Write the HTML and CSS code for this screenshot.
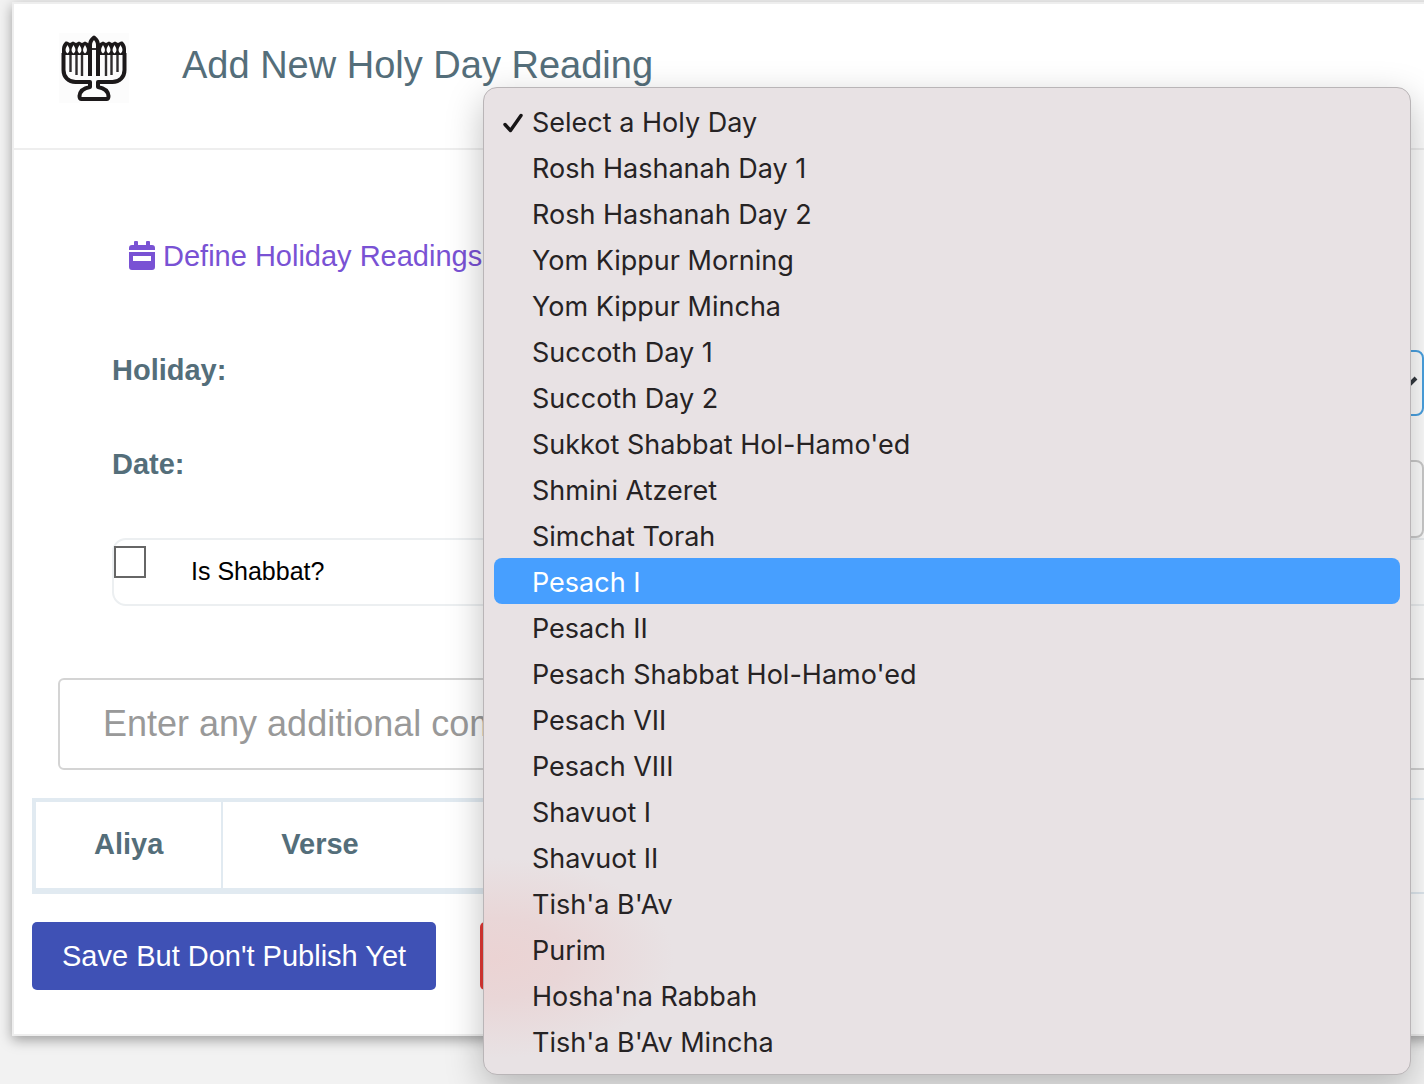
FILE: index.html
```html
<!DOCTYPE html>
<html lang="en">
  <head>
    <meta charset="UTF-8" />
    <meta name="viewport" content="width=device-width, initial-scale=1.0" />
    <title>Add New Holy Day Reading</title>
    <link rel="stylesheet" href="styles.css">
  </head>
  <body>
    <main class="card">
      <header class="card-header">
        <svg class="logo" viewBox="0 0 70 70" aria-hidden="true">
          <rect width="70" height="70" fill="#fcfcfc" />
          <g fill="none" stroke="#1c191a" stroke-width="4" stroke-linejoin="round">
            <path d="M4.500 20v17c0 7 5 12 12 12h14.500v5c-6 1-10 4-10.500 9q0 3 2 3h25q2 0 2-3c-.5-5-4.500-8-10.500-9v-5h14.500c7 0 12-5 12-12v-17" />
            <path d="M31 43V12c0-4 2-6 4-7.500 2 1.500 4 3.500 4 7.500v31" />
          </g>
          <path d="M3 22v-6c0-3 1.500-6 3.500-7.500h1.500l3 1.500 3-1.500 3 1.500 3-1.500 3 1.500 3-1.500 4 2v11.500zM67 22v-6c0-3-1.500-6-3.500-7.500h-1.500l-3 1.500-3-1.500-3 1.500-3-1.500-3 1.500-3-1.500-4 2v11.500z" fill="#1c191a" />
          <path d="M8.500 12q-4 6 0 8.500 4-2.500 0-8.500zM14.500 12q-4 6 0 8.500 4-2.500 0-8.500zM20.500 12q-4 6 0 8.500 4-2.500 0-8.500zM26 12q-4 6 0 8.500 4-2.500 0-8.500zM44 12q-4 6 0 8.500 4-2.500 0-8.500zM49.500 12q-4 6 0 8.500 4-2.500 0-8.500zM55.500 12q-4 6 0 8.500 4-2.500 0-8.500zM61.500 12q-4 6 0 8.500 4-2.500 0-8.500z" fill="#fff" />
          <path d="M32 16h6" stroke="#1c191a" stroke-width="1.800" />
          <path d="M11.500 22v17M17.500 22v20M23 22v21M58.500 22v17M52.500 22v20M47 22v21" fill="none" stroke="#302d2e" stroke-width="2.400" />
        </svg>
        <h1>Add New Holy Day Reading</h1>
      </header>

      <form class="reading-form">
        <a class="define-link" href="#">
          <svg class="calendar-icon" viewBox="0 0 26 30" aria-hidden="true">
            <path fill="currentColor" d="M6 0h2q1 0 1 1v3h8V1q0-1 1-1h2q1 0 1 1v3h2q3 0 3 3v2H0V7q0-3 3-3h2V1q0-1 1-1z" />
            <path fill="currentColor" fill-rule="evenodd" d="M0 11h26v15q0 3-3 3H3q-3 0-3-3zM4 15v5h18v-5z" />
          </svg>
          Define Holiday Readings
        </a>

        <div class="form-row">
          <label for="holiday">Holiday:</label>
          <div class="select-wrap">
            <select id="holiday">
              <option value=""></option>
              <option>Rosh Hashanah Day 1</option>
              <option>Rosh Hashanah Day 2</option>
              <option>Pesach I</option>
              <option>Pesach II</option>
            </select>
            <svg class="chevron" viewBox="0 0 26 16" aria-hidden="true">
              <path d="M2 2l11 11L24 2" fill="none" stroke="#343a40" stroke-width="4" />
            </svg>
          </div>
        </div>

        <div class="form-row">
          <label for="date">Date:</label>
          <input type="text" id="date" class="date-input" />
        </div>

        <div class="check-row">
          <input type="checkbox" id="shabbat" />
          <label for="shabbat">Is Shabbat?</label>
        </div>

        <textarea class="comments" rows="1" aria-label="Comments" placeholder="Enter any additional comments"></textarea>

        <div class="table-wrap">
          <table class="aliyot">
            <thead>
              <tr>
                <th class="aliya-col">Aliya</th>
                <th>Verse</th>
              </tr>
            </thead>
          </table>
        </div>

        <div class="actions">
          <button type="button" class="btn btn-save">Save But Don't Publish Yet</button>
          <button type="button" class="btn btn-cancel" aria-label="Cancel"></button>
        </div>
      </form>
    </main>

    <ul class="menu" role="listbox" aria-label="Holiday">
      <li role="option" aria-selected="true">
        <svg class="check" viewBox="0 0 20 20" aria-hidden="true">
          <path d="M2 11.500l5.500 6L18 2.500" fill="none" stroke="#171516" stroke-width="3.400" stroke-linecap="round" stroke-linejoin="round" />
        </svg>
        Select a Holy Day
      </li>
      <li role="option">Rosh Hashanah Day 1</li>
      <li role="option">Rosh Hashanah Day 2</li>
      <li role="option">Yom Kippur Morning</li>
      <li role="option">Yom Kippur Mincha</li>
      <li role="option">Succoth Day 1</li>
      <li role="option">Succoth Day 2</li>
      <li role="option">Sukkot Shabbat Hol-Hamo'ed</li>
      <li role="option">Shmini Atzeret</li>
      <li role="option">Simchat Torah</li>
      <li role="option" class="active">Pesach I</li>
      <li role="option">Pesach II</li>
      <li role="option">Pesach Shabbat Hol-Hamo'ed</li>
      <li role="option">Pesach VII</li>
      <li role="option">Pesach VIII</li>
      <li role="option">Shavuot I</li>
      <li role="option">Shavuot II</li>
      <li role="option">Tish'a B'Av</li>
      <li role="option">Purim</li>
      <li role="option">Hosha'na Rabbah</li>
      <li role="option">Tish'a B'Av Mincha</li>
    </ul>
  </body>
</html>
```

FILE: styles.css
```css
* {
  box-sizing: border-box;
}

body {
  margin: 0;
  min-height: 100vh;
  padding: 2px 0 0 12px;
  overflow-x: hidden;
  position: relative;
  background-color: #f2f2f2;
  font-family: "Liberation Sans", Arial, sans-serif;
  font-size: 29px;
  line-height: 34px;
  color: #546e7a;
}

/* the card runs past the right edge of the window */
.card {
  margin-right: -24px;
  background: #fff;
  border: 2px solid #eee;
  box-shadow: 0 4px 12px rgba(0, 0, 0, 0.35);
}

.card-header {
  display: flex;
  align-items: flex-start;
  gap: 53px;
  height: 146px;
  padding: 29px 45px;
  border-bottom: 2px solid #eee;
}

.logo {
  width: 70px;
  height: 70px;
}

h1 {
  margin: 10px 0 0;
  font-size: 38px;
  line-height: 44px;
  font-weight: 400;
}

.reading-form {
  padding: 89px 0 44px 18px;
}

.define-link {
  display: flex;
  align-items: center;
  gap: 8px;
  margin: 0 0 77px 97px;
  color: #7952d4;
  text-decoration: none;
}

.calendar-icon {
  width: 26px;
  height: 30px;
}

.form-row {
  display: flex;
  align-items: flex-start;
  height: 94px;
  padding: 0 22px 0 80px;
}

.form-row label {
  flex: 0 0 386px;
  line-height: 40px;
  font-weight: 700;
}

.select-wrap {
  position: relative;
  flex: 1;
}

select {
  appearance: none;
  display: block;
  width: 100%;
  height: 66px;
  padding: 0 24px;
  border: 2px solid #4ba3e3;
  border-radius: 8px;
  background: #fff;
  font: inherit;
}

.chevron {
  position: absolute;
  right: 6px;
  top: 26px;
  width: 26px;
  height: 16px;
}

.date-input {
  flex: 1;
  height: 78px;
  margin-top: 16px;
  padding: 0 24px;
  border: 2px solid #ccc;
  border-radius: 8px;
  font: inherit;
}

.check-row {
  display: flex;
  align-items: flex-start;
  gap: 45px;
  height: 68px;
  margin-left: 80px;
  padding-top: 6px;
  border: 2px solid #eceff1;
  border-radius: 14px;
}

.check-row input {
  appearance: none;
  width: 32px;
  height: 32px;
  margin: 0;
  border: 2px solid #666;
}

.check-row label {
  padding-top: 8px;
  font-size: 25px;
  color: #000;
}

.comments {
  display: block;
  width: calc(100% - 26px);
  height: 92px;
  margin: 72px 0 28px 26px;
  padding: 22px 43px;
  border: 2px solid #d4d4d4;
  border-radius: 6px;
  resize: none;
  overflow: hidden;
  font: inherit;
  font-size: 36px;
  line-height: 44px;
}

.comments::placeholder {
  color: #999;
}

.table-wrap {
  border: 2px solid #e1eaf1;
  border-right: 0;
}

.aliyot {
  width: 80%;
  border-collapse: collapse;
}

.aliyot th {
  height: 89px;
  padding: 0 58px 2px;
  border: 2px solid #e1eaf1;
  border-bottom-width: 4px;
  text-align: left;
}

.aliyot .aliya-col {
  width: 1%;
}

.actions {
  display: flex;
  gap: 44px;
  margin-top: 28px;
}

.btn {
  height: 68px;
  padding: 0 30px;
  border: 0;
  border-radius: 5px;
  font: inherit;
  color: #fff;
}

.btn-save {
  background: #3f51b5;
}

.btn-cancel {
  min-width: 150px;
  background: #e53935;
}

.menu {
  position: absolute;
  top: 87px;
  left: 483px;
  right: 13px;
  margin: 0;
  padding: 10px;
  list-style: none;
  border: 1px solid #b9b5b7;
  border-radius: 14px;
  background: radial-gradient(ellipse 180px 100px at 10px 870px, #ebd3d3, #e9d6d7 40%, #e8e2e4) #e8e2e4;
  box-shadow: 0 12px 36px rgba(0, 0, 0, 0.25);
  font-family: Inter, sans-serif;
  font-size: 27px;
  line-height: 42px;
  color: #262324;
}

.menu li {
  position: relative;
  padding: 4px 0 0 38px;
  border-radius: 8px;
}

.menu .active {
  background: #479fff;
  color: #fff;
}

.check {
  position: absolute;
  left: 9px;
  top: 15px;
  width: 20px;
  height: 20px;
}
```
